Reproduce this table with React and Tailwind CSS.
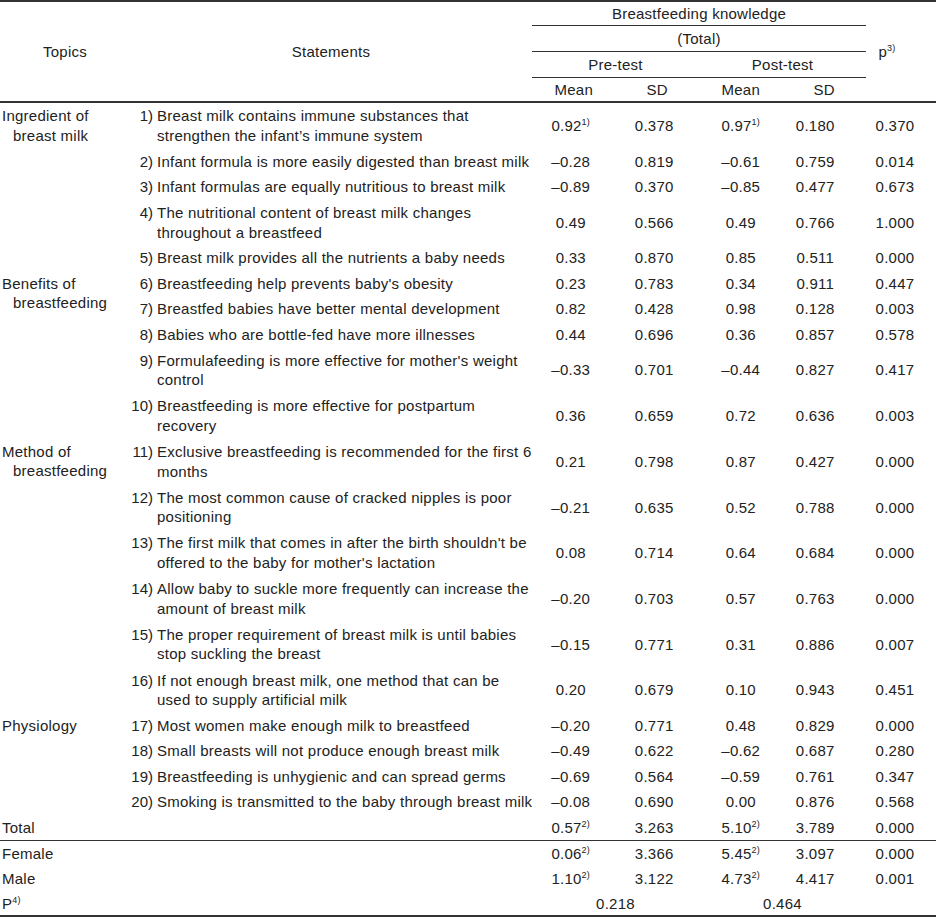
import React from "react";

const rows = [
  { n: "1)", lines: ["Breast milk contains immune substances that", "strengthen the infant’s immune system"], v: ["0.92", "0.378", "0.97", "0.180", "0.370"], sup: ["1)", null, "1)"] },
  { n: "2)", lines: ["Infant formula is more easily digested than breast milk"], v: ["–0.28", "0.819", "–0.61", "0.759", "0.014"] },
  { n: "3)", lines: ["Infant formulas are equally nutritious to breast milk"], v: ["–0.89", "0.370", "–0.85", "0.477", "0.673"] },
  { n: "4)", lines: ["The nutritional content of breast milk changes", "throughout a breastfeed"], v: ["0.49", "0.566", "0.49", "0.766", "1.000"] },
  { n: "5)", lines: ["Breast milk provides all the nutrients a baby needs"], v: ["0.33", "0.870", "0.85", "0.511", "0.000"] },
  { n: "6)", lines: ["Breastfeeding help prevents baby's obesity"], v: ["0.23", "0.783", "0.34", "0.911", "0.447"] },
  { n: "7)", lines: ["Breastfed babies have better mental development"], v: ["0.82", "0.428", "0.98", "0.128", "0.003"] },
  { n: "8)", lines: ["Babies who are bottle-fed have more illnesses"], v: ["0.44", "0.696", "0.36", "0.857", "0.578"] },
  { n: "9)", lines: ["Formulafeeding is more effective for mother's weight", "control"], v: ["–0.33", "0.701", "–0.44", "0.827", "0.417"] },
  { n: "10)", lines: ["Breastfeeding is more effective for postpartum", "recovery"], v: ["0.36", "0.659", "0.72", "0.636", "0.003"] },
  { n: "11)", lines: ["Exclusive breastfeeding is recommended for the first 6", "months"], v: ["0.21", "0.798", "0.87", "0.427", "0.000"] },
  { n: "12)", lines: ["The most common cause of cracked nipples is poor", "positioning"], v: ["–0.21", "0.635", "0.52", "0.788", "0.000"] },
  { n: "13)", lines: ["The first milk that comes in after the birth shouldn't be", "offered to the baby for mother's lactation"], v: ["0.08", "0.714", "0.64", "0.684", "0.000"] },
  { n: "14)", lines: ["Allow baby to suckle more frequently can increase the", "amount of breast milk"], v: ["–0.20", "0.703", "0.57", "0.763", "0.000"] },
  { n: "15)", lines: ["The proper requirement of breast milk is until babies", "stop suckling the breast"], v: ["–0.15", "0.771", "0.31", "0.886", "0.007"] },
  { n: "16)", lines: ["If not enough breast milk, one method that can be", "used to supply artificial milk"], v: ["0.20", "0.679", "0.10", "0.943", "0.451"] },
  { n: "17)", lines: ["Most women make enough milk to breastfeed"], v: ["–0.20", "0.771", "0.48", "0.829", "0.000"] },
  { n: "18)", lines: ["Small breasts will not produce enough breast milk"], v: ["–0.49", "0.622", "–0.62", "0.687", "0.280"] },
  { n: "19)", lines: ["Breastfeeding is unhygienic and can spread germs"], v: ["–0.69", "0.564", "–0.59", "0.761", "0.347"] },
  { n: "20)", lines: ["Smoking is transmitted to the baby through breast milk"], v: ["–0.08", "0.690", "0.00", "0.876", "0.568"] },
];

const topics = {
  0: { span: 5, lines: ["Ingredient of", "breast milk"] },
  5: { span: 5, lines: ["Benefits of", "breastfeeding"] },
  10: { span: 6, lines: ["Method of", "breastfeeding"] },
  16: { span: 4, lines: ["Physiology"] },
};

const valPad = ["pr-[6px]", "pr-[6px]", "pr-0", "pr-[18px]", "pr-[12px]"];

function Sup({ children }) {
  return <span className="relative -top-[6px] text-[9px] leading-none">{children}</span>;
}

function ValueCells({ v, sup = [], h }) {
  return v.map((x, i) => (
    <td key={i} className={`p-0 text-center align-middle whitespace-nowrap ${valPad[i]}`} style={{ height: h }}>
      {x}
      {sup[i] ? <Sup>{sup[i]}</Sup> : null}
    </td>
  ));
}

export default function App() {
  return (
    <div className="w-[936px] bg-white text-[#222] text-[15px] leading-[19.5px] tracking-[0.25px]" style={{ fontFamily: '"Liberation Sans", Arial, sans-serif' }}>
      <table className="w-[936px] table-fixed border-separate border-spacing-0">
        <colgroup>
          <col className="w-[130px]" />
          <col className="w-[402px]" />
          <col className="w-[83.5px]" />
          <col className="w-[83.5px]" />
          <col className="w-[83.5px]" />
          <col className="w-[83.5px]" />
          <col className="w-[70px]" />
        </colgroup>
        <thead>
          <tr>
            <th rowSpan={4} className="p-0 font-normal text-center align-middle border-t-2 border-b-2 border-[#333]">Topics</th>
            <th rowSpan={4} className="p-0 font-normal text-center align-middle border-t-2 border-b-2 border-[#333]">Statements</th>
            <th colSpan={4} className="p-0 h-[26px] font-normal text-center align-middle border-t-2 border-b border-[#333]">Breastfeeding knowledge</th>
            <th rowSpan={4} className="p-0 pr-[28px] font-normal text-center align-middle border-t-2 border-b-2 border-[#333]">
              p<Sup>3)</Sup>
            </th>
          </tr>
          <tr>
            <th colSpan={4} className="p-0 h-[26px] font-normal text-center align-middle border-b border-[#333]">(Total)</th>
          </tr>
          <tr>
            <th colSpan={2} className="p-0 h-[26px] font-normal text-center align-middle border-b border-[#333]">Pre-test</th>
            <th colSpan={2} className="p-0 h-[26px] font-normal text-center align-middle border-b border-[#333]">Post-test</th>
          </tr>
          <tr>
            <th className="p-0 h-[25px] font-normal text-center align-middle border-b-2 border-[#333]">Mean</th>
            <th className="p-0 h-[25px] font-normal text-center align-middle border-b-2 border-[#333]">SD</th>
            <th className="p-0 h-[25px] font-normal text-center align-middle border-b-2 border-[#333]">Mean</th>
            <th className="p-0 h-[25px] font-normal text-center align-middle border-b-2 border-[#333]">SD</th>
          </tr>
        </thead>
        <tbody>
          {rows.map((r, idx) => {
            const h = r.lines.length > 1 ? "45.7px" : "25.5px";
            const t = topics[idx];
            return (
              <tr key={idx}>
                {t ? (
                  <td rowSpan={t.span} className="p-0 pt-[3px] pl-[2px] align-top whitespace-nowrap">
                    {t.lines.map((l, i) => (
                      <div key={i} className={i > 0 ? "ml-[11px]" : ""}>{l}</div>
                    ))}
                  </td>
                ) : null}
                <td className="p-0 align-middle whitespace-nowrap" style={{ height: h }}>
                  <div className="flex">
                    <span className="w-[23px] shrink-0 text-right tracking-normal">{r.n}</span>
                    <div className="pl-[4px]">
                      {r.lines.map((l, i) => (
                        <div key={i}>{l}</div>
                      ))}
                    </div>
                  </div>
                </td>
                <ValueCells v={r.v} sup={r.sup} h={h} />
              </tr>
            );
          })}
          <tr>
            <td colSpan={2} className="p-0 pl-[2px] align-middle border-b border-[#333]" style={{ height: "26px" }}>Total</td>
            <td className="p-0 pr-[6px] text-center align-middle border-b border-[#333]">0.57<Sup>2)</Sup></td>
            <td className="p-0 pr-[6px] text-center align-middle border-b border-[#333]">3.263</td>
            <td className="p-0 text-center align-middle border-b border-[#333]">5.10<Sup>2)</Sup></td>
            <td className="p-0 pr-[18px] text-center align-middle border-b border-[#333]">3.789</td>
            <td className="p-0 pr-[12px] text-center align-middle border-b border-[#333]">0.000</td>
          </tr>
          <tr>
            <td colSpan={2} className="p-0 pl-[2px] align-middle" style={{ height: "25.5px" }}>Female</td>
            <td className="p-0 pr-[6px] text-center align-middle">0.06<Sup>2)</Sup></td>
            <td className="p-0 pr-[6px] text-center align-middle">3.366</td>
            <td className="p-0 text-center align-middle">5.45<Sup>2)</Sup></td>
            <td className="p-0 pr-[18px] text-center align-middle">3.097</td>
            <td className="p-0 pr-[12px] text-center align-middle">0.000</td>
          </tr>
          <tr>
            <td colSpan={2} className="p-0 pl-[2px] align-middle" style={{ height: "25.5px" }}>Male</td>
            <td className="p-0 pr-[6px] text-center align-middle">1.10<Sup>2)</Sup></td>
            <td className="p-0 pr-[6px] text-center align-middle">3.122</td>
            <td className="p-0 text-center align-middle">4.73<Sup>2)</Sup></td>
            <td className="p-0 pr-[18px] text-center align-middle">4.417</td>
            <td className="p-0 pr-[12px] text-center align-middle">0.001</td>
          </tr>
          <tr>
            <td colSpan={2} className="p-0 pl-[2px] align-middle border-b-2 border-[#333]" style={{ height: "25px" }}>
              P<Sup>4)</Sup>
            </td>
            <td colSpan={2} className="p-0 text-center align-middle border-b-2 border-[#333]">0.218</td>
            <td colSpan={2} className="p-0 text-center align-middle border-b-2 border-[#333]">0.464</td>
            <td className="p-0 border-b-2 border-[#333]"></td>
          </tr>
        </tbody>
      </table>
    </div>
  );
}
